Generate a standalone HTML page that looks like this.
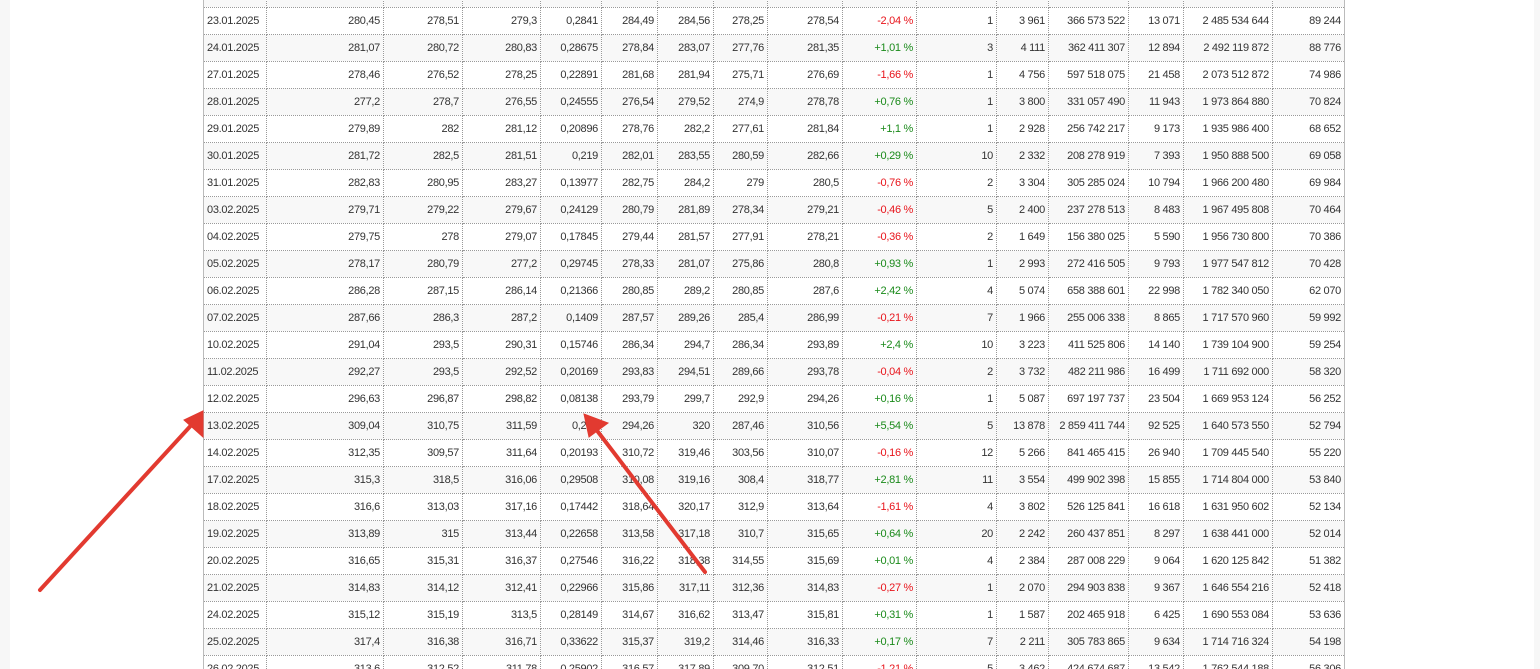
<!DOCTYPE html>
<html><head><meta charset="utf-8"><style>
html,body{margin:0;padding:0;width:1540px;height:669px;overflow:hidden;background:#fff;position:relative}
.sl{position:absolute;top:0;left:0;width:10px;height:669px;background:#f7f7f7}
.sr{position:absolute;top:0;right:0;width:6px;height:669px;background:#f7f7f7}
table{position:absolute;left:203px;top:-20px;border-collapse:collapse;table-layout:fixed;font-family:"Liberation Sans",sans-serif;font-size:11px;color:#333;border-left:1px solid #bbb;border-right:1px solid #bbb}
td{height:26px;padding:0 3px;border:1px dotted #999;text-align:right;white-space:nowrap;overflow:hidden;letter-spacing:-0.3px}
td:first-child{text-align:left}
tr:nth-child(odd) td{background:#f8f8f8}
.r{color:#e8141b}.g{color:#1a8a1a}
svg{position:absolute;left:0;top:0}
</style></head><body>
<div class="sl"></div><div class="sr"></div>
<table>
<colgroup><col style="width:63px"><col style="width:117px"><col style="width:79px"><col style="width:78px"><col style="width:61px"><col style="width:56px"><col style="width:56px"><col style="width:54px"><col style="width:75px"><col style="width:74px"><col style="width:80px"><col style="width:52px"><col style="width:80px"><col style="width:55px"><col style="width:89px"><col style="width:72px"></colgroup>
<tr><td>22.01.2025</td><td>285,9</td><td>284,1</td><td>284,9</td><td>0,2312</td><td>284,1</td><td>286,4</td><td>282,5</td><td>284,35</td><td class="r">-0,4 %</td><td>1</td><td>3 500</td><td>300 000 000</td><td>10 000</td><td>2 400 000 000</td><td>88 000</td></tr>
<tr><td>23.01.2025</td><td>280,45</td><td>278,51</td><td>279,3</td><td>0,2841</td><td>284,49</td><td>284,56</td><td>278,25</td><td>278,54</td><td class="r">-2,04 %</td><td>1</td><td>3 961</td><td>366 573 522</td><td>13 071</td><td>2 485 534 644</td><td>89 244</td></tr>
<tr><td>24.01.2025</td><td>281,07</td><td>280,72</td><td>280,83</td><td>0,28675</td><td>278,84</td><td>283,07</td><td>277,76</td><td>281,35</td><td class="g">+1,01 %</td><td>3</td><td>4 111</td><td>362 411 307</td><td>12 894</td><td>2 492 119 872</td><td>88 776</td></tr>
<tr><td>27.01.2025</td><td>278,46</td><td>276,52</td><td>278,25</td><td>0,22891</td><td>281,68</td><td>281,94</td><td>275,71</td><td>276,69</td><td class="r">-1,66 %</td><td>1</td><td>4 756</td><td>597 518 075</td><td>21 458</td><td>2 073 512 872</td><td>74 986</td></tr>
<tr><td>28.01.2025</td><td>277,2</td><td>278,7</td><td>276,55</td><td>0,24555</td><td>276,54</td><td>279,52</td><td>274,9</td><td>278,78</td><td class="g">+0,76 %</td><td>1</td><td>3 800</td><td>331 057 490</td><td>11 943</td><td>1 973 864 880</td><td>70 824</td></tr>
<tr><td>29.01.2025</td><td>279,89</td><td>282</td><td>281,12</td><td>0,20896</td><td>278,76</td><td>282,2</td><td>277,61</td><td>281,84</td><td class="g">+1,1 %</td><td>1</td><td>2 928</td><td>256 742 217</td><td>9 173</td><td>1 935 986 400</td><td>68 652</td></tr>
<tr><td>30.01.2025</td><td>281,72</td><td>282,5</td><td>281,51</td><td>0,219</td><td>282,01</td><td>283,55</td><td>280,59</td><td>282,66</td><td class="g">+0,29 %</td><td>10</td><td>2 332</td><td>208 278 919</td><td>7 393</td><td>1 950 888 500</td><td>69 058</td></tr>
<tr><td>31.01.2025</td><td>282,83</td><td>280,95</td><td>283,27</td><td>0,13977</td><td>282,75</td><td>284,2</td><td>279</td><td>280,5</td><td class="r">-0,76 %</td><td>2</td><td>3 304</td><td>305 285 024</td><td>10 794</td><td>1 966 200 480</td><td>69 984</td></tr>
<tr><td>03.02.2025</td><td>279,71</td><td>279,22</td><td>279,67</td><td>0,24129</td><td>280,79</td><td>281,89</td><td>278,34</td><td>279,21</td><td class="r">-0,46 %</td><td>5</td><td>2 400</td><td>237 278 513</td><td>8 483</td><td>1 967 495 808</td><td>70 464</td></tr>
<tr><td>04.02.2025</td><td>279,75</td><td>278</td><td>279,07</td><td>0,17845</td><td>279,44</td><td>281,57</td><td>277,91</td><td>278,21</td><td class="r">-0,36 %</td><td>2</td><td>1 649</td><td>156 380 025</td><td>5 590</td><td>1 956 730 800</td><td>70 386</td></tr>
<tr><td>05.02.2025</td><td>278,17</td><td>280,79</td><td>277,2</td><td>0,29745</td><td>278,33</td><td>281,07</td><td>275,86</td><td>280,8</td><td class="g">+0,93 %</td><td>1</td><td>2 993</td><td>272 416 505</td><td>9 793</td><td>1 977 547 812</td><td>70 428</td></tr>
<tr><td>06.02.2025</td><td>286,28</td><td>287,15</td><td>286,14</td><td>0,21366</td><td>280,85</td><td>289,2</td><td>280,85</td><td>287,6</td><td class="g">+2,42 %</td><td>4</td><td>5 074</td><td>658 388 601</td><td>22 998</td><td>1 782 340 050</td><td>62 070</td></tr>
<tr><td>07.02.2025</td><td>287,66</td><td>286,3</td><td>287,2</td><td>0,1409</td><td>287,57</td><td>289,26</td><td>285,4</td><td>286,99</td><td class="r">-0,21 %</td><td>7</td><td>1 966</td><td>255 006 338</td><td>8 865</td><td>1 717 570 960</td><td>59 992</td></tr>
<tr><td>10.02.2025</td><td>291,04</td><td>293,5</td><td>290,31</td><td>0,15746</td><td>286,34</td><td>294,7</td><td>286,34</td><td>293,89</td><td class="g">+2,4 %</td><td>10</td><td>3 223</td><td>411 525 806</td><td>14 140</td><td>1 739 104 900</td><td>59 254</td></tr>
<tr><td>11.02.2025</td><td>292,27</td><td>293,5</td><td>292,52</td><td>0,20169</td><td>293,83</td><td>294,51</td><td>289,66</td><td>293,78</td><td class="r">-0,04 %</td><td>2</td><td>3 732</td><td>482 211 986</td><td>16 499</td><td>1 711 692 000</td><td>58 320</td></tr>
<tr><td>12.02.2025</td><td>296,63</td><td>296,87</td><td>298,82</td><td>0,08138</td><td>293,79</td><td>299,7</td><td>292,9</td><td>294,26</td><td class="g">+0,16 %</td><td>1</td><td>5 087</td><td>697 197 737</td><td>23 504</td><td>1 669 953 124</td><td>56 252</td></tr>
<tr><td>13.02.2025</td><td>309,04</td><td>310,75</td><td>311,59</td><td>0,254</td><td>294,26</td><td>320</td><td>287,46</td><td>310,56</td><td class="g">+5,54 %</td><td>5</td><td>13 878</td><td>2 859 411 744</td><td>92 525</td><td>1 640 573 550</td><td>52 794</td></tr>
<tr><td>14.02.2025</td><td>312,35</td><td>309,57</td><td>311,64</td><td>0,20193</td><td>310,72</td><td>319,46</td><td>303,56</td><td>310,07</td><td class="r">-0,16 %</td><td>12</td><td>5 266</td><td>841 465 415</td><td>26 940</td><td>1 709 445 540</td><td>55 220</td></tr>
<tr><td>17.02.2025</td><td>315,3</td><td>318,5</td><td>316,06</td><td>0,29508</td><td>310,08</td><td>319,16</td><td>308,4</td><td>318,77</td><td class="g">+2,81 %</td><td>11</td><td>3 554</td><td>499 902 398</td><td>15 855</td><td>1 714 804 000</td><td>53 840</td></tr>
<tr><td>18.02.2025</td><td>316,6</td><td>313,03</td><td>317,16</td><td>0,17442</td><td>318,64</td><td>320,17</td><td>312,9</td><td>313,64</td><td class="r">-1,61 %</td><td>4</td><td>3 802</td><td>526 125 841</td><td>16 618</td><td>1 631 950 602</td><td>52 134</td></tr>
<tr><td>19.02.2025</td><td>313,89</td><td>315</td><td>313,44</td><td>0,22658</td><td>313,58</td><td>317,18</td><td>310,7</td><td>315,65</td><td class="g">+0,64 %</td><td>20</td><td>2 242</td><td>260 437 851</td><td>8 297</td><td>1 638 441 000</td><td>52 014</td></tr>
<tr><td>20.02.2025</td><td>316,65</td><td>315,31</td><td>316,37</td><td>0,27546</td><td>316,22</td><td>318,38</td><td>314,55</td><td>315,69</td><td class="g">+0,01 %</td><td>4</td><td>2 384</td><td>287 008 229</td><td>9 064</td><td>1 620 125 842</td><td>51 382</td></tr>
<tr><td>21.02.2025</td><td>314,83</td><td>314,12</td><td>312,41</td><td>0,22966</td><td>315,86</td><td>317,11</td><td>312,36</td><td>314,83</td><td class="r">-0,27 %</td><td>1</td><td>2 070</td><td>294 903 838</td><td>9 367</td><td>1 646 554 216</td><td>52 418</td></tr>
<tr><td>24.02.2025</td><td>315,12</td><td>315,19</td><td>313,5</td><td>0,28149</td><td>314,67</td><td>316,62</td><td>313,47</td><td>315,81</td><td class="g">+0,31 %</td><td>1</td><td>1 587</td><td>202 465 918</td><td>6 425</td><td>1 690 553 084</td><td>53 636</td></tr>
<tr><td>25.02.2025</td><td>317,4</td><td>316,38</td><td>316,71</td><td>0,33622</td><td>315,37</td><td>319,2</td><td>314,46</td><td>316,33</td><td class="g">+0,17 %</td><td>7</td><td>2 211</td><td>305 783 865</td><td>9 634</td><td>1 714 716 324</td><td>54 198</td></tr>
<tr><td>26.02.2025</td><td>313,6</td><td>312,52</td><td>311,78</td><td>0,25902</td><td>316,57</td><td>317,89</td><td>309,70</td><td>312,51</td><td class="r">-1,21 %</td><td>5</td><td>3 462</td><td>424 674 687</td><td>13 542</td><td>1 762 544 188</td><td>56 306</td></tr>
</table>
<svg width="1540" height="669" viewBox="0 0 1540 669">
<g stroke="#e23a30" stroke-width="4" stroke-linecap="round" fill="#e23a30">
<line x1="40" y1="590" x2="196" y2="420"/>
<polygon points="203,411 184,420 203,437" stroke-width="1"/>
<line x1="705" y1="572" x2="592" y2="424"/>
<polygon points="584,414 589,437 608,423" stroke-width="1"/>
</g>
</svg>
</body></html>
